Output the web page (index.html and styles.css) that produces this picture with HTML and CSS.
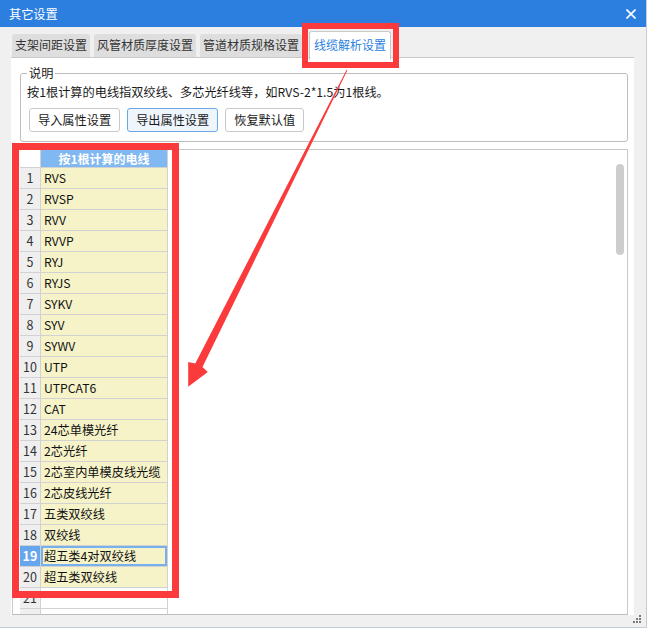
FILE: index.html
```html
<!DOCTYPE html>
<html lang="zh-CN">
<head>
<meta charset="utf-8">
<title>其它设置</title>
<link rel="stylesheet" href="styles.css">
</head>
<body>
<div class="window">
  <div class="titlebar">
    <span class="title">其它设置</span>
    <svg class="close" width="10" height="10" viewBox="0 0 10 10"><path d="M0.5 0.5 L9.5 9.5 M9.5 0.5 L0.5 9.5" stroke="#fff" stroke-width="1.6" fill="none"/></svg>
  </div>
  <div class="tabs">
    <div class="tab">支架间距设置</div>
    <div class="tab">风管材质厚度设置</div>
    <div class="tab">管道材质规格设置</div>
    <div class="tab active">线缆解析设置</div>
  </div>
  <div class="panel">
    <fieldset class="group">
      <legend>说明</legend>
      <p class="desc">按1根计算的电线指双绞线、多芯光纤线等，如RVS-2*1.5为1根线。</p>
      <div class="buttons">
        <button class="btn">导入属性设置</button>
        <button class="btn focused">导出属性设置</button>
        <button class="btn">恢复默认值</button>
      </div>
    </fieldset>
    <div class="gridbox">
      <div class="grid">
        <div class="corner"></div><div class="colhead">按1根计算的电线</div>
        <div class="num">1</div><div class="cell">RVS</div>
        <div class="num">2</div><div class="cell">RVSP</div>
        <div class="num">3</div><div class="cell">RVV</div>
        <div class="num">4</div><div class="cell">RVVP</div>
        <div class="num">5</div><div class="cell">RYJ</div>
        <div class="num">6</div><div class="cell">RYJS</div>
        <div class="num">7</div><div class="cell">SYKV</div>
        <div class="num">8</div><div class="cell">SYV</div>
        <div class="num">9</div><div class="cell">SYWV</div>
        <div class="num">10</div><div class="cell">UTP</div>
        <div class="num">11</div><div class="cell">UTPCAT6</div>
        <div class="num">12</div><div class="cell">CAT</div>
        <div class="num">13</div><div class="cell">24芯单模光纤</div>
        <div class="num">14</div><div class="cell">2芯光纤</div>
        <div class="num">15</div><div class="cell">2芯室内单模皮线光缆</div>
        <div class="num">16</div><div class="cell">2芯皮线光纤</div>
        <div class="num">17</div><div class="cell">五类双绞线</div>
        <div class="num">18</div><div class="cell">双绞线</div>
        <div class="num sel">19</div><div class="cell sel">超五类4对双绞线</div>
        <div class="num">20</div><div class="cell">超五类双绞线</div>
        <div class="num">21</div><div class="cell empty"></div>
        <div class="num"></div><div class="cell empty"></div>
      </div>
      <div class="thumb"></div>
    </div>
  </div>
  <svg class="grip" width="10" height="9" viewBox="0 0 10 9">
    <rect x="6" y="0" width="2" height="2" fill="#7d7d7d"/>
    <rect x="3" y="3" width="2" height="2" fill="#7d7d7d"/>
    <rect x="6" y="3" width="2" height="2" fill="#7d7d7d"/>
    <rect x="0" y="6" width="2" height="2" fill="#7d7d7d"/>
    <rect x="3" y="6" width="2" height="2" fill="#7d7d7d"/>
    <rect x="6" y="6" width="2" height="2" fill="#7d7d7d"/>
  </svg>
  <div class="mark mark-tab"></div>
  <div class="mark mark-grid"></div>
  <svg class="arrow" width="647" height="628" viewBox="0 0 647 628">
    <polygon fill="#fb3b3b" points="346.6,69.8 195.3,363.4 188.2,362.1 188.2,386.7 207.8,371.9 202.5,367 347.4,70.2"/>
  </svg>
</div>
</body>
</html>
```

FILE: styles.css
```css
* { box-sizing: border-box; }
html, body { margin: 0; padding: 0; }
body {
  width: 647px;
  height: 628px;
  overflow: hidden;
  font-family: "Noto Sans CJK SC", "Noto Sans", sans-serif;
  font-size: 12px;
  color: #1a1a1a;
}
.window {
  position: relative;
  width: 647px;
  height: 628px;
  background: #f0f0f0;
  border-right: 1px solid #c3ccd8;
  border-bottom: 1px solid #c3ccd8;
  display: flex;
  flex-direction: column;
}
.titlebar {
  height: 27px;
  flex: none;
  background: #2c7fdf;
  color: #fff;
  display: flex;
  align-items: center;
  justify-content: space-between;
  padding: 0 10px 0 9px;
}
.title { font-size: 12.2px; line-height: 16px; }
.close { display: block; }
.tabs {
  height: 30px;
  flex: none;
  display: flex;
  align-items: flex-end;
  gap: 4px;
  padding-left: 12px;
}
.tab {
  height: 23px;
  line-height: 22px;
  padding: 0 3px;
  font-size: 12px;
  background: #dedede;
  color: #333;
  border-radius: 3px 3px 0 0;
  white-space: nowrap;
}
.tab.active {
  height: 29px;
  margin-bottom: -3px;
  margin-left: 3px;
  padding: 1px 4px 0;
  line-height: 23px;
  background: #fff;
  color: #2c7fdf;
  border: 1px solid #c8c8c8;
  border-bottom: none;
  position: relative;
  z-index: 1;
}
.panel {
  margin-left: 11px;
  width: 623px;
  height: 558px;
  flex: none;
  background: #fff;
  border-top: 1px solid #c9c9c9;
  display: flex;
  flex-direction: column;
}
.group {
  margin: 7px 6px 0 9px;
  padding: 3px 8px 9px 6px;
  border: 1px solid #bdbdbd;
  border-radius: 3px;
  min-width: 0;
}
.group legend {
  padding: 0 2px;
  line-height: 16px;
  font-size: 12.2px;
  color: #1a1a1a;
}
.desc {
  margin: 0;
  line-height: 16px;
  font-size: 12.2px;
  white-space: nowrap;
}
.buttons {
  display: flex;
  gap: 7px;
  margin-top: 8px;
  padding-left: 2px;
}
.btn {
  height: 24px;
  padding: 0 8px;
  font-family: inherit;
  font-size: 12.2px;
  line-height: 20px;
  color: #1a1a1a;
  background: #fff;
  border: 1px solid #c9c9c9;
  border-radius: 3px;
}
.btn.focused {
  background: #eef5fd;
  border-color: #6aa7e8;
}
.gridbox {
  position: relative;
  margin: 7px 6px 0 1px;
  flex: 1;
  border: 1px solid #c8c8c8;
  border-bottom-color: #bdbdbd;
  padding-left: 7px;
  overflow: hidden;
}
.grid {
  display: grid;
  grid-template-columns: 21px 127px;
  grid-template-rows: 18px;
  grid-auto-rows: 21px;
}
.grid > div {
  border-right: 1px solid #d2d2d2;
  border-bottom: 1px solid #d2d2d2;
  white-space: nowrap;
  overflow: hidden;
}
.corner { background: #fff; }
.colhead {
  background: #80b8f2;
  color: #fff;
  font-weight: bold;
  text-align: center;
  line-height: 17px;
}
.num {
  background: #efefef;
  color: #333;
  text-align: center;
  line-height: 20px;
  font-size: 12.5px;
}
.num.sel {
  background: #66a6ef;
  color: #fff;
  font-weight: bold;
}
.cell {
  background: #f6f3c9;
  padding-left: 3px;
  line-height: 20px;
  font-size: 12.2px;
  color: #111;
}
.cell.sel { box-shadow: inset 0 0 0 2px #77b0ec; }
.cell.empty { background: #fff; }
.thumb {
  position: absolute;
  right: 3px;
  top: 14px;
  width: 8px;
  height: 91px;
  border-radius: 4px;
  background: #cdcdcd;
}
.grip {
  position: absolute;
  right: 3px;
  bottom: 3px;
}
.mark {
  position: absolute;
  border-style: solid;
  border-color: #fb3b3b;
  z-index: 5;
}
.mark-tab {
  left: 302px;
  top: 23px;
  width: 97px;
  height: 45px;
  border-width: 6px;
}
.mark-grid {
  left: 12px;
  top: 143px;
  width: 167px;
  height: 455px;
  border-width: 7px;
}
.arrow {
  position: absolute;
  left: 0;
  top: 0;
  z-index: 6;
  pointer-events: none;
}
```
